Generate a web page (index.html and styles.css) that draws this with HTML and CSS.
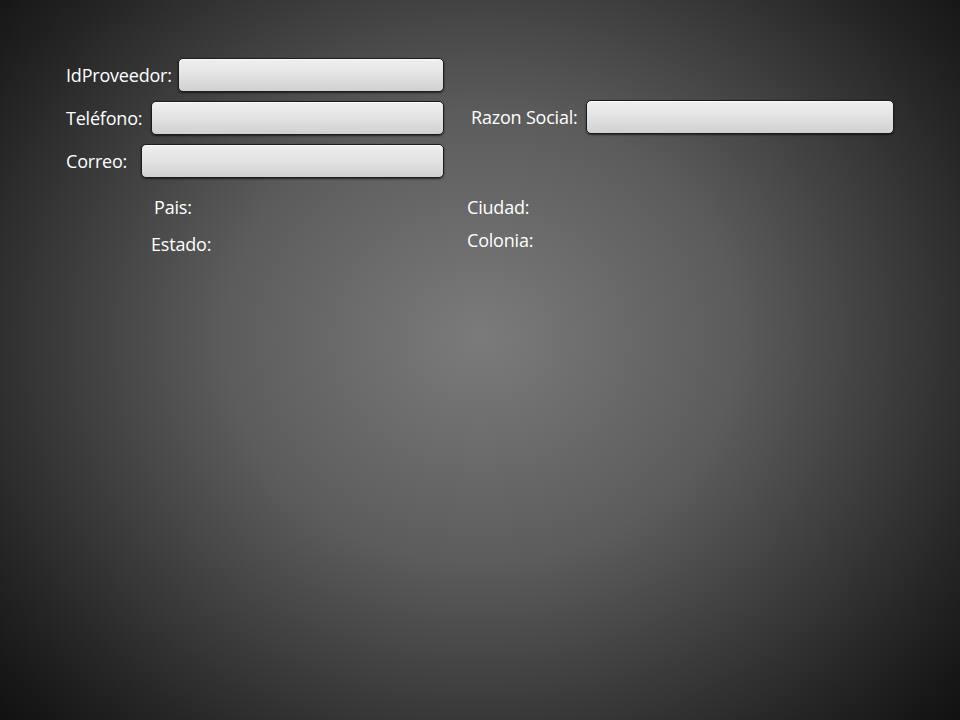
FILE: index.html
```html
<!DOCTYPE html>
<html lang="es">
<head>
<meta charset="utf-8">
<title>Proveedor</title>
<link rel="stylesheet" href="styles.css">
</head>
<body>
<div class="page">
  <div class="form">
    <div class="col-left">
      <div class="row">
        <label class="lbl">IdProveedor:</label>
        <div class="field w-id"></div>
      </div>
      <div class="row">
        <label class="lbl">Teléfono:</label>
        <div class="field w-tel"></div>
      </div>
      <div class="row">
        <label class="lbl">Correo:</label>
        <div class="field w-mail"></div>
      </div>
    </div>
    <div class="col-right">
      <div class="row">
        <label class="lbl">Razon Social:</label>
        <div class="field w-rs"></div>
      </div>
    </div>
  </div>
  <div class="addr">
    <div class="addr-left">
      <span class="lbl pais">Pais:</span>
      <span class="lbl estado">Estado:</span>
    </div>
    <div class="addr-right">
      <span class="lbl ciudad">Ciudad:</span>
      <span class="lbl colonia">Colonia:</span>
    </div>
  </div>
</div>
</body>
</html>
```

FILE: styles.css
```css
html, body {
  margin: 0;
  padding: 0;
  height: 100%;
}
body {
  background: radial-gradient(ellipse 70% 82% at 50% 47%, #7b7b7b 0%, #5c5c5c 38%, #242424 80%, #0c0c0c 100%);
  font-family: "Open Sans", "Noto Sans", sans-serif;
  color: #ffffff;
  overflow: hidden;
}
.page {
  width: 960px;
  height: 720px;
  padding: 58px 0 0 66px;
  box-sizing: border-box;
}
.form {
  display: flex;
  align-items: flex-start;
}
.col-left {
  width: 378px;
  display: flex;
  flex-direction: column;
  gap: 9px;
}
.col-right {
  margin-top: 42px;
  margin-left: 27px;
  width: 423px;
}
.row {
  display: flex;
  justify-content: space-between;
  align-items: center;
  height: 34px;
}
.lbl {
  font-size: 18px;
  letter-spacing: -0.2px;
  line-height: 22px;
  white-space: nowrap;
}
.field {
  height: 32px;
  border: 1px solid #1c1c1c;
  border-radius: 5px;
  background: linear-gradient(#efefef 0%, #e4e4e4 45%, #d0d0d0 100%);
  box-shadow: 0 1px 2px rgba(0,0,0,0.6), inset 0 1px 0 #fafafa;
}
.w-id { width: 264px; }
.w-tel { width: 291px; }
.w-mail { width: 301px; }
.w-rs { width: 306px; }
.addr {
  display: flex;
  margin-top: 18px;
}
.addr-left {
  width: 316px;
  display: flex;
  flex-direction: column;
  padding-left: 85px;
}
.addr-right {
  display: flex;
  flex-direction: column;
}
.pais { margin-left: 3px; }
.estado { margin-top: 15px; }
.colonia { margin-top: 11px; }
```
